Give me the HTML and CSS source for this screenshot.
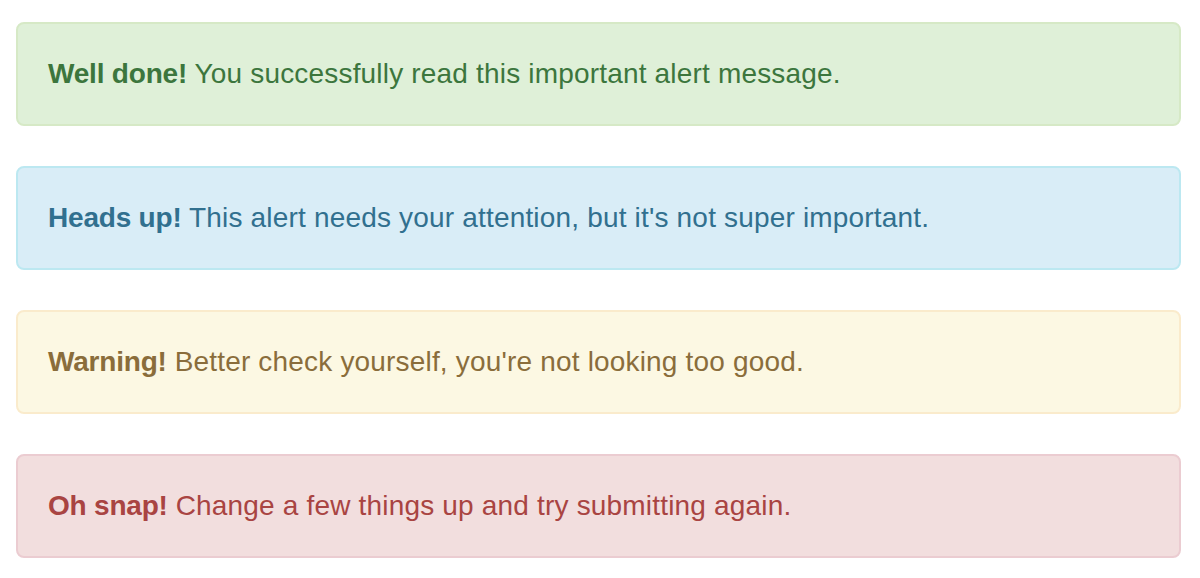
FILE: index.html
```html
<!DOCTYPE html>
<html>
<head>
<meta charset="utf-8">
<link rel="stylesheet" href="styles.css">
</head>
<body>
<div class="alerts">
  <div class="alert alert-success"><strong>Well done!</strong> You successfully read this important alert message.</div>
  <div class="alert alert-info"><strong>Heads up!</strong> This alert needs your attention, but it's not super important.</div>
  <div class="alert alert-warning"><strong>Warning!</strong> Better check yourself, you're not looking too good.</div>
  <div class="alert alert-danger"><strong>Oh snap!</strong> Change a few things up and try submitting again.</div>
</div>
</body>
</html>
```
FILE: styles.css
```css
html, body { margin: 0; padding: 0; background: #fff; }
body {
  font-family: "Liberation Sans", Arial, sans-serif;
  font-size: 28px;
  line-height: 40px;
}
.alerts {
  padding: 22px 19px 0 16px;
  display: flex;
  flex-direction: column;
  gap: 40px;
}
.alert {
  padding: 30px;
  border: 2px solid transparent;
  border-radius: 8px;
  letter-spacing: 0.18px;
}
.alert strong { font-weight: bold; letter-spacing: -0.2px; }
.alert-success { background: #dff0d8; border-color: #d6e9c6; color: #3c763d; }
.alert-info { background: #d9edf7; border-color: #bce8f1; color: #31708f; }
.alert-warning { background: #fcf8e3; border-color: #faebcc; color: #8a6d3b; }
.alert-danger { background: #f2dede; border-color: #ebccd1; color: #a94442; }
```
